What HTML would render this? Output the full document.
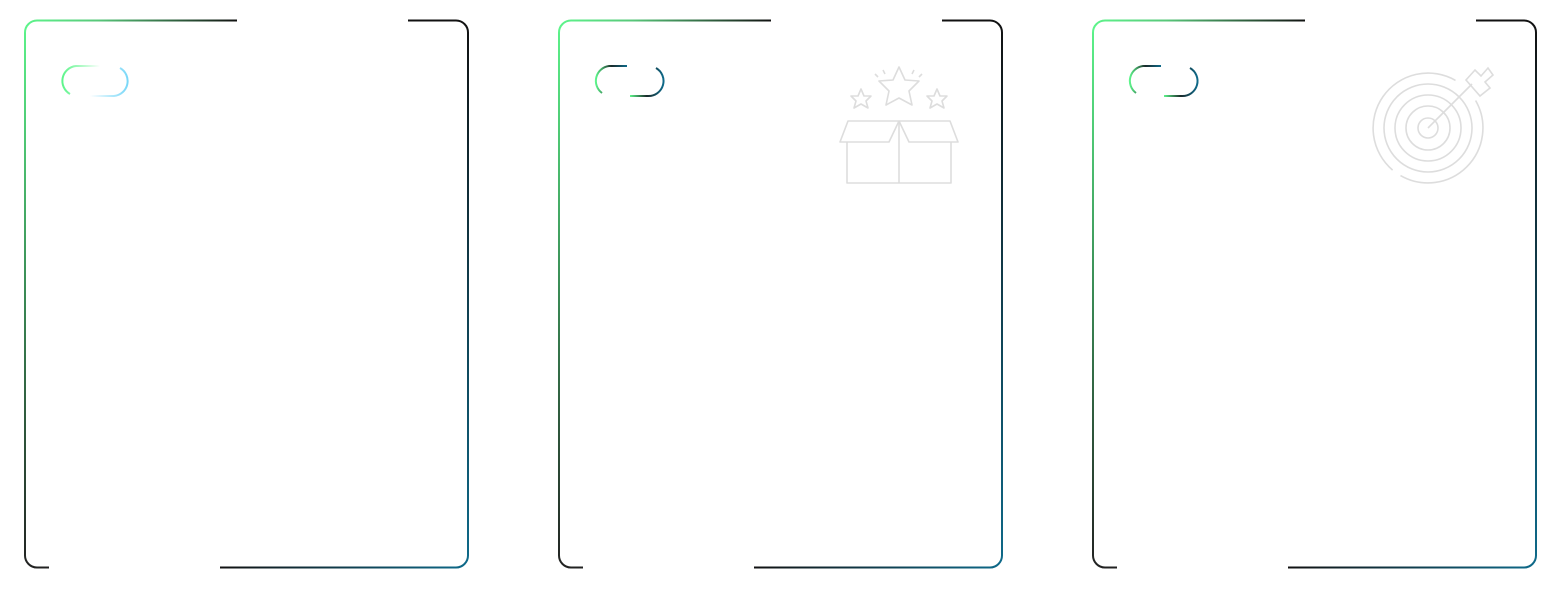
<!DOCTYPE html>
<html><head><style>
html,body{margin:0;padding:0;background:#fff;width:1562px;height:598px;overflow:hidden}
.card{position:absolute;top:20px;width:445px;height:549px;border-radius:12px;box-shadow:0 6px 14px rgba(0,0,0,0.05)}
svg{position:absolute;left:0;top:0;overflow:visible}
</style></head><body>
<svg width="1562" height="598">
<defs>
<linearGradient id="gt" x1="0" y1="0" x2="213" y2="0" gradientUnits="userSpaceOnUse"><stop offset="0" stop-color="#5df58b"/><stop offset="0.35" stop-color="#58c77a"/><stop offset="1" stop-color="#111"/></linearGradient>
<linearGradient id="gl" x1="0" y1="0" x2="0" y2="549" gradientUnits="userSpaceOnUse"><stop offset="0" stop-color="#5df58b"/><stop offset="0.5" stop-color="#3a8a55"/><stop offset="1" stop-color="#222"/></linearGradient>
<linearGradient id="gr" x1="0" y1="0" x2="0" y2="549" gradientUnits="userSpaceOnUse"><stop offset="0" stop-color="#111"/><stop offset="1" stop-color="#0e6a8a"/></linearGradient>
<linearGradient id="gb" x1="196" y1="0" x2="445" y2="0" gradientUnits="userSpaceOnUse"><stop offset="0" stop-color="#111"/><stop offset="1" stop-color="#0e6a8a"/></linearGradient>
<linearGradient id="pa" x1="0" y1="0" x2="1" y2="0"><stop offset="0" stop-color="#5df58b"/><stop offset="1" stop-color="#5df58b" stop-opacity="0"/></linearGradient>
<linearGradient id="pb" x1="0" y1="0" x2="1" y2="0"><stop offset="0" stop-color="#7ad8f8" stop-opacity="0"/><stop offset="1" stop-color="#7ad8f8"/></linearGradient>
<linearGradient id="p2" x1="0" y1="0" x2="1" y2="0"><stop offset="0" stop-color="#5df58b"/><stop offset="0.5" stop-color="#1a2a2a"/><stop offset="1" stop-color="#0e6a8a"/></linearGradient>
<g id="frame" fill="none" stroke-width="2">
<path d="M213 1 H13 A12 12 0 0 0 1 13" stroke="url(#gt)"/>
<path d="M1 13 V536 A12 12 0 0 0 13 548 H25" stroke="url(#gl)"/>
<path d="M384 1 H432 A12 12 0 0 1 444 13 V536" stroke="url(#gr)"/>
<path d="M196 548 H432 A12 12 0 0 0 444 536" stroke="url(#gb)"/>
</g>
</defs>
<rect x="24" y="20" width="445" height="549" rx="12" fill="#fff"/>
<use href="#frame" x="24" y="19.5"/>
<use href="#frame" x="558" y="19.5"/>
<use href="#frame" x="1092" y="19.5"/>
<g fill="none" stroke-width="2">
<path d="M100 66 H76 A15 15 0 0 0 70 94" stroke="url(#pa)"/>
<path d="M90 96 H114 A15 15 0 0 0 120 68" stroke="url(#pb)"/>
</g>
<g fill="none" stroke="url(#p2)" stroke-width="2">
<path d="M627 66 H609 A15 15 0 0 0 602 93"/>
<path d="M630 96 H648 A15 15 0 0 0 656 68"/>
<path d="M1161 66 H1143 A15 15 0 0 0 1136 93"/>
<path d="M1164 96 H1182 A15 15 0 0 0 1190 68"/>
</g>
<g fill="none" stroke="#ddd" stroke-width="1.6" stroke-linejoin="round">
<path d="M899 67 L905 80 L919 81 L909 91 L912 105 L899 98 L886 105 L889 91 L879 81 L893 80 Z"/>
<path d="M861 89 L864 96 L871 96 L866 101 L868 108 L861 104 L854 108 L856 101 L851 96 L858 96 Z"/>
<path d="M937 89 L940 96 L947 96 L942 101 L944 108 L937 104 L930 108 L932 101 L927 96 L934 96 Z"/>
<path d="M883 70 L885 74 M914 70 L912 74 M875 74 L878 77 M922 74 L919 77"/>
<path d="M848 121 H950 L958 142 H909 L899 121 L889 142 H840 Z"/>
<path d="M847 142 V183 H951 V142 M899 121 V183"/>
</g>
<g fill="none" stroke="#ddd" stroke-width="1.6">
<path d="M1392.6 170.1 A55 55 0 0 1 1455.5 80.4"/>
<path d="M1475.6 100.5 A55 55 0 0 1 1400.5 175.6"/>
<circle cx="1428" cy="128" r="44"/>
<circle cx="1428" cy="128" r="33"/>
<circle cx="1428" cy="128" r="22"/>
<circle cx="1428" cy="128" r="10"/>
<path d="M1428 128 L1472 84"/>
<path d="M1466 80 L1475 70 L1481 76 L1488 68 L1493 75 L1485 82 L1490 88 L1480 96 Z"/>
</g>
</svg>
<div class="card" style="left:558px;z-index:-1"></div>
<div class="card" style="left:1092px;z-index:-1"></div>
<div class="card" style="left:24px;z-index:-1"></div>
</body></html>
